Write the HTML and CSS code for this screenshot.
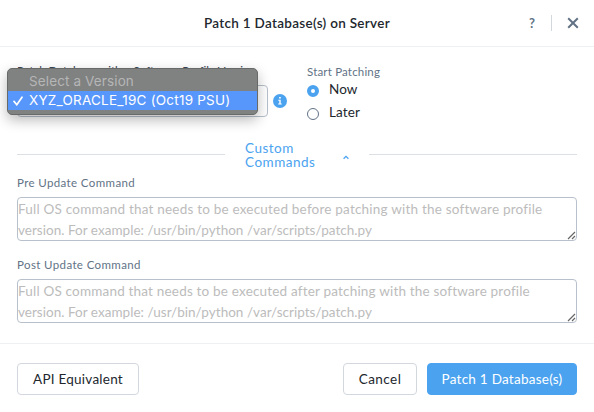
FILE: index.html
```html
<!DOCTYPE html>
<html lang="en">
<head>
<meta charset="utf-8">
<title>Patch 1 Database(s) on Server</title>
<link rel="stylesheet" href="styles.css">
</head>
<body>
<div class="dialog">
  <header class="header">
    <h1 class="title">Patch 1 Database(s) on Server</h1>
    <div class="tools">
      <span class="help">?</span>
      <span class="divider"></span>
      <svg class="close" viewBox="0 0 12 12" width="12" height="12"><path d="M1.2 1.2l9.6 9.6M10.8 1.2l-9.6 9.6"/></svg>
    </div>
  </header>
  <main class="body">
    <section class="options">
      <div class="version">
        <div class="label version-label">Patch Database with a Software Profile Version</div>
        <div class="select-row">
          <div class="select"></div>
          <svg class="info" viewBox="0 0 14 14" width="14" height="14"><circle cx="7" cy="7" r="7"/><path d="M6.1 3.1h1.7v1.5H6.1zM5.3 5.8h2.4v3.8h1v1H5.2v-1h1.1V6.8h-1z"/></svg>
        </div>
        <div class="menu">
          <div class="menu-item disabled">Select a Version</div>
          <div class="menu-item selected"><svg class="check" viewBox="0 0 10 10" width="10" height="10"><path d="M1 5.4l2.8 3.3L9 1.2"/></svg><span>XYZ_ORACLE_19C (Oct19 PSU)</span></div>
        </div>
      </div>
      <div class="start">
        <div class="label">Start Patching</div>
        <div class="radio"><span class="dot on"></span><span class="radio-text">Now</span></div>
        <div class="radio"><span class="dot"></span><span class="radio-text">Later</span></div>
      </div>
    </section>
    <div class="separator">
      <span class="rule"></span>
      <div class="toggle"><span class="toggle-text">Custom<br>Commands</span><svg class="caret" viewBox="0 0 6 5" width="6" height="5"><path d="M.6 3.8L3 1.4l2.4 2.4"/></svg></div>
      <span class="rule"></span>
    </div>
    <div class="field">
      <div class="label field-label">Pre Update Command</div>
      <div class="area"><div class="line-first">Full OS command that needs to be executed before patching with the software profile</div><div class="line-second">version. For example: /usr/bin/python /var/scripts/patch.py</div>
        <svg class="grip" viewBox="0 0 9 9" width="9" height="9"><path d="M1 8l7-7M5 8l3-3"/></svg></div>
    </div>
    <div class="field">
      <div class="label field-label">Post Update Command</div>
      <div class="area"><div class="line-first line-post">Full OS command that needs to be executed after patching with the software profile</div><div class="line-second">version. For example: /usr/bin/python /var/scripts/patch.py</div>
        <svg class="grip" viewBox="0 0 9 9" width="9" height="9"><path d="M1 8l7-7M5 8l3-3"/></svg></div>
    </div>
  </main>
  <footer class="footer">
    <div class="btn api">API Equivalent</div>
    <div class="btn cancel">Cancel</div>
    <div class="btn primary">Patch 1 Database(s)</div>
  </footer>
</div>
</body>
</html>
```
FILE: styles.css
```css
* { box-sizing: border-box; }
body {
  margin: 0;
  background: #fff;
  color: #22272e;
  font-family: Lato, "Liberation Sans", sans-serif;
  font-size: 13.5px;
  overflow: hidden;
}
svg { fill: none; flex: none; display: block; }
.dialog { width: 594px; height: 412px; display: flex; flex-direction: column; }

.header {
  height: 47px;
  border-bottom: 1px solid #eff0f2;
  display: grid;
  grid-template-columns: 1fr auto 1fr;
  align-items: center;
}
.title {
  grid-column: 2;
  margin: 0;
  font-size: 13.5px;
  line-height: 20px;
  font-weight: 600;
  letter-spacing: .3px;
  white-space: nowrap;
}
.tools { display: flex; align-items: center; justify-content: flex-end; padding-right: 15px; }
.help { color: #627386; font-size: 13px; font-weight: 700; margin-right: 16px; }
.divider { width: 1px; height: 16px; background: #d3d8df; margin-right: 15px; }
.close path { stroke: #627386; stroke-width: 2; }

.body { flex: 1; padding: 17px 17px 0; }
.label { color: #627386; font-size: 11.5px; line-height: 16px; letter-spacing: .18px; white-space: nowrap; }
.options { display: flex; height: 76px; }
.version { position: relative; width: 290px; }
.version-label { height: 16px; line-height: 14px; color: #3a4654; letter-spacing: .05px; }
.select-row { display: flex; align-items: center; gap: 5px; margin-top: 5px; }
.select { width: 251px; height: 32px; border: 1px solid #b7c0cb; border-radius: 4px; }
.info circle { fill: #4ba3f0; }
.info path { fill: #fff; }
.menu {
  position: absolute;
  left: -10px;
  top: 4px;
  width: 251px;
  height: 47px;
  padding: 3px 0;
  background: #808181;
  border: 1px solid #686969;
  border-radius: 5px;
  box-shadow: 0 5px 13px rgba(0,0,0,.28);
  font: 13.5px/19px Inter, "Liberation Sans", sans-serif;
  letter-spacing: .12px;
  white-space: nowrap;
}
.menu-item { height: 19px; padding-left: 21px; display: flex; align-items: center; }
.disabled { color: #b5b6b6; }
.selected { color: #fff; background: #5796fa; padding-left: 5px; gap: 6px; letter-spacing: .23px; }
.check path { stroke: #fff; stroke-width: 1.7; stroke-linecap: round; }
.radio { display: flex; align-items: center; gap: 10px; height: 23px; line-height: 19px; letter-spacing: .1px; }
.start .label { margin-bottom: -1px; }
.radio-text { position: relative; top: -1px; }
.dot { width: 12px; height: 12px; border: 1px solid #627386; border-radius: 50%; }
.dot.on { border: 4px solid #4ba3f0; }

.separator { display: flex; align-items: center; height: 29px; }
.rule { height: 1px; background: #dcdfe3; flex: 1; }
.toggle { width: 144px; display: flex; align-items: center; padding-left: 20px; color: #4ba3f0; line-height: 14px; letter-spacing: .5px; }
.toggle-text { width: 70px; margin-right: 28px; }
.caret { margin-top: 5px; }
.caret path { stroke: #4ba3f0; stroke-width: 1.3; }

.field { height: 82px; padding-top: 6px; }
.field-label { letter-spacing: .38px; }
.area {
  position: relative;
  height: 44px;
  margin-top: 6px;
  border: 1px solid #b7c0cb;
  border-radius: 4px;
  padding: 1px 0;
  color: #bcbcbc;
  line-height: 21px;
  white-space: nowrap;
}
.line-first { letter-spacing: .21px; }
.line-post { letter-spacing: .19px; }
.line-second { letter-spacing: .03px; }
.grip { position: absolute; right: 0; bottom: 0; }
.grip path { stroke: #666; stroke-width: 1.2; }

.footer {
  height: 69px;
  border-top: 1px solid #eff0f2;
  padding: 19px 17px 0;
  display: flex;
}
.btn {
  height: 32px;
  border: 1px solid #d3d8df;
  border-radius: 4px;
  display: flex;
  align-items: center;
  justify-content: center;
  letter-spacing: .25px;
  white-space: nowrap;
}
.api { width: 122px; margin-right: auto; }
.cancel { width: 74px; margin-right: 10px; letter-spacing: .45px; }
.primary { width: 150px; border-color: #4ba3f0; background: #4ba3f0; color: #fff; }
```
